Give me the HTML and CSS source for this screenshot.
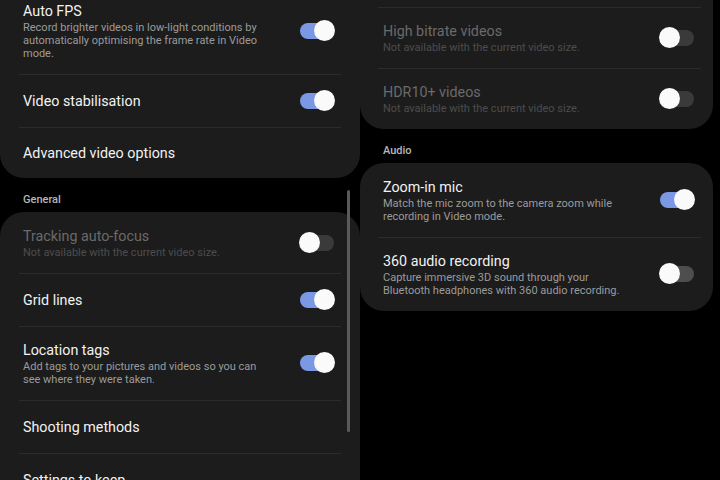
FILE: index.html
```html
<!DOCTYPE html>
<html lang="en">
<head>
  <meta charset="UTF-8">
  <title>Camera settings</title>
  <link rel="stylesheet" href="styles.css">
</head>
<body>
<div class="pantallas">
  <div class="panel izquierda">
    <div class="tarjeta corte-arriba">
      <div class="fila">
        <div class="texto">
          <div class="titulo">Auto FPS</div>
          <div class="desc">Record brighter videos in low-light conditions by automatically optimising the frame rate in Video mode.</div>
        </div>
        <span class="interruptor on"></span>
      </div>
      <div class="fila">
        <div class="texto">
          <div class="titulo">Video stabilisation</div>
        </div>
        <span class="interruptor on"></span>
      </div>
      <div class="fila ultima">
        <div class="texto">
          <div class="titulo">Advanced video options</div>
        </div>
      </div>
    </div>

    <div class="seccion">General</div>
    <div class="tarjeta">
      <div class="fila desactivada">
        <div class="texto">
          <div class="titulo">Tracking auto-focus</div>
          <div class="desc">Not available with the current video size.</div>
        </div>
        <span class="interruptor"></span>
      </div>
      <div class="fila">
        <div class="texto">
          <div class="titulo">Grid lines</div>
        </div>
        <span class="interruptor on"></span>
      </div>
      <div class="fila">
        <div class="texto">
          <div class="titulo">Location tags</div>
          <div class="desc">Add tags to your pictures and videos so you can see where they were taken.</div>
        </div>
        <span class="interruptor on"></span>
      </div>
      <div class="fila">
        <div class="texto">
          <div class="titulo">Shooting methods</div>
        </div>
      </div>
      <div class="fila">
        <div class="texto">
          <div class="titulo">Settings to keep</div>
        </div>
      </div>
    </div>
    <div class="scroll"></div>
  </div>

  <div class="panel derecha">
    <div class="tarjeta corte-arriba con-linea">
      <div class="fila desactivada">
        <div class="texto">
          <div class="titulo">High bitrate videos</div>
          <div class="desc">Not available with the current video size.</div>
        </div>
        <span class="interruptor"></span>
      </div>
      <div class="fila desactivada">
        <div class="texto">
          <div class="titulo">HDR10+ videos</div>
          <div class="desc">Not available with the current video size.</div>
        </div>
        <span class="interruptor"></span>
      </div>
    </div>

    <div class="seccion">Audio</div>
    <div class="tarjeta">
      <div class="fila">
        <div class="texto">
          <div class="titulo">Zoom-in mic</div>
          <div class="desc">Match the mic zoom to the camera zoom while recording in Video mode.</div>
        </div>
        <span class="interruptor on"></span>
      </div>
      <div class="fila">
        <div class="texto">
          <div class="titulo">360 audio recording</div>
          <div class="desc">Capture immersive 3D sound through your Bluetooth headphones with 360 audio recording.</div>
        </div>
        <span class="interruptor apagado"></span>
      </div>
    </div>
  </div>
</div>
</body>
</html>
```

FILE: styles.css
```css
body {
  margin: 0;
  background-color: #000;
  font-family: Roboto, "Noto Sans", sans-serif;
  color: #f2f2f2;
  overflow: hidden;
}

.pantallas {
  display: flex;
  height: 480px;
}

.panel {
  position: relative;
  box-sizing: border-box;
}

.izquierda {
  width: 360px;
  --margen-izq: 23px;
  --margen-der: 26px;
  --linea-izq: 19px;
  --linea-der: 19px;
}

.derecha {
  width: 353px;
  --margen-izq: 23px;
  --margen-der: 19px;
  --linea-izq: 18px;
  --linea-der: 12px;
}

.tarjeta {
  background-color: #1c1c1c;
  border-radius: 24px;
}

.corte-arriba {
  border-radius: 0 0 24px 24px;
}

.izquierda .corte-arriba .fila:first-child {
  padding-top: 1px;
}

.con-linea {
  padding-top: 7px;
}

.fila {
  position: relative;
  display: flex;
  align-items: center;
  gap: 35px;
  min-height: 53px;
  box-sizing: border-box;
  padding: 14px var(--margen-der) 14px var(--margen-izq);
}

.fila.ultima {
  min-height: 51px;
}

.fila + .fila::before,
.con-linea .fila:first-child::before {
  content: "";
  position: absolute;
  top: 0;
  left: var(--linea-izq);
  right: var(--linea-der);
  height: 1px;
  background-color: #2c2c2c;
}

.texto {
  flex: 1;
}

.titulo {
  font-size: 14.3px;
  line-height: 20px;
}

.desc {
  font-size: 11px;
  line-height: 13px;
  color: #9b9b9b;
}

.desactivada .titulo {
  color: #6a6a6a;
}

.desactivada .desc {
  color: #4c4c4c;
}

.seccion {
  font-size: 11px;
  line-height: 13px;
  font-weight: 500;
  color: #b8b8b8;
  padding: 15px 23px 6px;
}

.interruptor {
  position: relative;
  flex: none;
  width: 34px;
  height: 16px;
  border-radius: 8px;
  background-color: #3a3a3a;
}

.interruptor::after {
  content: "";
  position: absolute;
  top: -3px;
  left: -1px;
  width: 21px;
  height: 21px;
  border-radius: 50%;
  background-color: #fafafa;
}

.interruptor.on {
  background-color: #7b98e4;
}

.interruptor.on::after {
  left: auto;
  right: -1px;
}

.interruptor.apagado {
  background-color: #4e4e4e;
}

.scroll {
  position: absolute;
  left: 347px;
  top: 190px;
  width: 3px;
  height: 242px;
  border-radius: 2px;
  background-color: #5a5a5a;
}
```
